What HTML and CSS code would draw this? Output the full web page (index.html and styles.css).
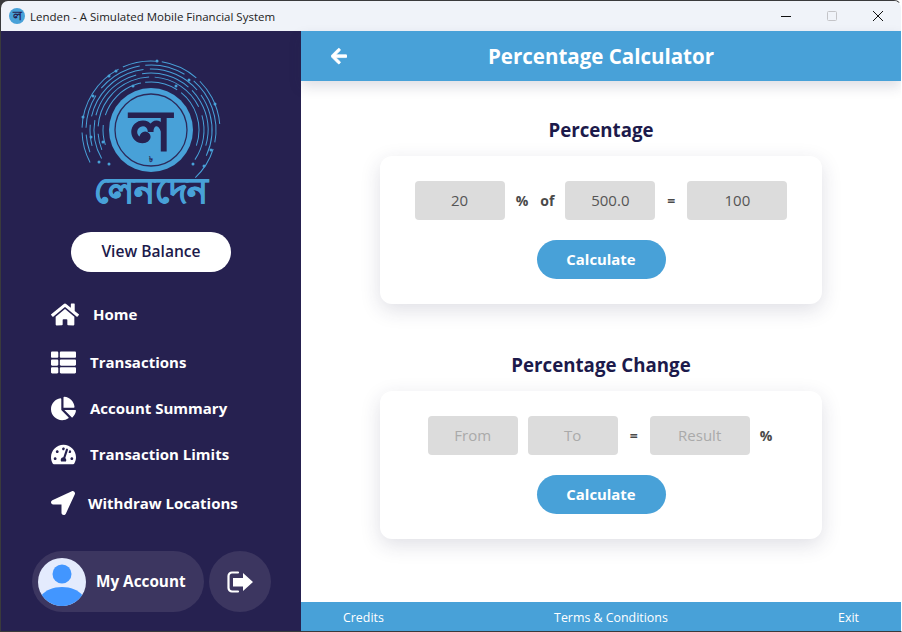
FILE: index.html
```html
<!DOCTYPE html>
<html lang="en">
<head>
<meta charset="utf-8">
<title>Lenden</title>
<link rel="stylesheet" href="styles.css">
</head>
<body>
<div class="window">
  <header class="titlebar">
    <svg class="app-icon" viewBox="0 0 16 16"><circle cx="8" cy="8" r="8" fill="#48a1d8"/><text class="app-letter" x="8" y="12" text-anchor="middle">ল</text></svg>
    <span class="app-title">Lenden - A Simulated Mobile Financial System</span>
    <div class="win-controls">
      <svg class="win-btn" viewBox="0 0 46 30"><path d="M18 15.500h10" stroke="#111" stroke-width="1"/></svg>
      <svg class="win-btn" viewBox="0 0 46 30"><rect x="18.500" y="10.500" width="9" height="9" rx="1" fill="none" stroke="#c4c4c8"/></svg>
      <svg class="win-btn" viewBox="0 0 46 30"><path d="M18 10l10 10M28 10L18 20" stroke="#111" stroke-width="1" fill="none"/></svg>
    </div>
  </header>
  <div class="app">
    <aside class="sidebar">
      <svg class="logo" viewBox="0 0 160 170">
        <g fill="none" stroke="#48a1d8" stroke-width="1">
          <circle cx="80" cy="80" r="69" pathLength="360" stroke-dasharray="26 4 60 4 30 3 32 4 40 157" transform="rotate(152 80 80)"/>
          <circle cx="80" cy="80" r="65" pathLength="360" stroke-dasharray="16 6 30 8 40 5 36 10 60 6 30 113" transform="rotate(160 80 80)"/>
          <circle cx="80" cy="80" r="61" pathLength="360" stroke-dasharray="20 8 70 6 50 6 60 140" transform="rotate(165 80 80)"/>
          <circle cx="80" cy="80" r="57" pathLength="360" stroke-dasharray="40 5 60 6 50 5 60 134" transform="rotate(150 80 80)"/>
          <circle cx="80" cy="80" r="53" pathLength="360" stroke-dasharray="18 8 84 6 60 10 50 124" transform="rotate(158 80 80)"/>
          <circle cx="80" cy="80" r="48" pathLength="360" stroke-dasharray="24 12 60 5 40 6 70 143" transform="rotate(162 80 80)"/>
        </g>
        <g fill="#48a1d8">
          <circle cx="38" cy="114" r="1.500"/><circle cx="28" cy="112" r="1.500"/><circle cx="12" cy="67" r="1.500"/><circle cx="22" cy="46" r="1.500"/>
          <circle cx="38" cy="26" r="1.500"/><circle cx="45" cy="21" r="1.500"/><circle cx="86" cy="11" r="1.500"/><circle cx="118" cy="30" r="1.500"/>
          <circle cx="144" cy="54" r="1.500"/><circle cx="122" cy="114" r="1.500"/><circle cx="133" cy="116" r="1.500"/><circle cx="140" cy="100" r="1.500"/>
          <circle cx="20" cy="87" r="1.500"/><circle cx="32" cy="92" r="1.500"/><circle cx="62" cy="36" r="1.500"/><circle cx="105" cy="36" r="1.500"/>
          <circle cx="80" cy="80" r="42"/>
        </g>
        <circle cx="80" cy="80" r="36" fill="none" stroke="#2c2a5a" stroke-width="1.300"/>
        <text class="logo-letter" x="80" y="100" text-anchor="middle">ল</text>
        <text class="logo-taka" x="80" y="112" text-anchor="middle">৳</text>
        <text class="logo-word" x="80" y="153" text-anchor="middle">লেনদেন</text>
      </svg>
      <button class="balance-btn">View Balance</button>
      <nav class="nav">
        <a class="nav-item">
          <svg class="ico-home" viewBox="0 0 576 512"><path d="M280.37 148.26L96 300.11V464a16 16 0 0 0 16 16l112.06-.29a16 16 0 0 0 15.92-16V368a16 16 0 0 1 16-16h64a16 16 0 0 1 16 16v95.64a16 16 0 0 0 16 16.05L464 480a16 16 0 0 0 16-16V300L295.67 148.26a12.19 12.19 0 0 0-15.3 0zM571.6 251.47L488 182.56V44.05a12 12 0 0 0-12-12h-56a12 12 0 0 0-12 12v72.61L318.47 43a48 48 0 0 0-61 0L4.34 251.47a12 12 0 0 0-1.6 16.9l25.5 31A12 12 0 0 0 45.15 301l235.22-193.74a12.19 12.19 0 0 1 15.3 0L530.9 301a12 12 0 0 0 16.9-1.6l25.5-31a12 12 0 0 0-1.7-16.93z"/></svg>
          <span>Home</span>
        </a>
        <a class="nav-item nav-t">
          <svg class="ico-md" viewBox="0 0 512 512"><path d="M149.333 216v80c0 13.255-10.745 24-24 24H24c-13.255 0-24-10.745-24-24v-80c0-13.255 10.745-24 24-24h101.333c13.255 0 24 10.745 24 24zM0 376v80c0 13.255 10.745 24 24 24h101.333c13.255 0 24-10.745 24-24v-80c0-13.255-10.745-24-24-24H24c-13.255 0-24 10.745-24 24zM125.333 32H24C10.745 32 0 42.745 0 56v80c0 13.255 10.745 24 24 24h101.333c13.255 0 24-10.745 24-24V56c0-13.255-10.745-24-24-24zm80 448H488c13.255 0 24-10.745 24-24v-80c0-13.255-10.745-24-24-24H205.333c-13.255 0-24 10.745-24 24v80c0 13.255 10.745 24 24 24zm-24-424v80c0 13.255 10.745 24 24 24H488c13.255 0 24-10.745 24-24V56c0-13.255-10.745-24-24-24H205.333c-13.255 0-24 10.745-24 24zm24 264H488c13.255 0 24-10.745 24-24v-80c0-13.255-10.745-24-24-24H205.333c-13.255 0-24 10.745-24 24v80c0 13.255 10.745 24 24 24z"/></svg>
          <span>Transactions</span>
        </a>
        <a class="nav-item nav-s">
          <svg class="ico-md" viewBox="0 0 544 512"><path d="M527.79 288H290.5l158.03 158.03c6.04 6.04 15.98 6.53 22.19.68 38.7-36.46 65.32-85.61 73.13-140.86 1.34-9.46-6.51-17.85-16.06-17.85zm-15.83-64.8C503.72 103.74 408.26 8.28 288.8.04 279.68-.59 272 7.1 272 16.24V240h223.77c9.14 0 16.82-7.68 16.19-16.8zM224 288V50.71c0-9.55-8.39-17.4-17.84-16.06C86.99 51.49-4.1 155.6.14 280.37 4.5 408.51 114.83 513.59 243.03 511.98c50.4-.63 96.97-16.87 135.26-44.03 7.9-5.6 8.42-17.23 1.57-24.08L224 288z"/></svg>
          <span>Account Summary</span>
        </a>
        <a class="nav-item nav-s">
          <svg class="ico-md" viewBox="0 0 576 512"><path d="M288 32C128.94 32 0 160.94 0 320c0 52.8 14.25 102.26 39.06 144.8 5.61 9.62 16.3 15.2 27.44 15.2h443c11.14 0 21.83-5.58 27.44-15.2C561.75 422.26 576 372.8 576 320c0-159.06-128.94-288-288-288zm0 64c14.71 0 26.58 10.13 30.32 23.65-1.11 2.26-2.64 4.23-3.45 6.67l-9.22 27.67c-5.13 3.49-10.97 6.01-17.64 6.01-17.67 0-32-14.33-32-32S270.33 96 288 96zM96 384c-17.67 0-32-14.33-32-32s14.33-32 32-32 32 14.33 32 32-14.33 32-32 32zm48-160c-17.67 0-32-14.33-32-32s14.33-32 32-32 32 14.33 32 32-14.33 32-32 32zm246.77-72.41l-61.33 184C343.13 347.33 352 364.54 352 384c0 11.72-3.38 22.55-8.88 32H232.88c-5.5-9.45-8.88-20.28-8.88-32 0-33.94 26.5-61.43 59.9-63.59l61.34-184.01c4.17-12.56 17.73-19.45 30.36-15.17 12.57 4.19 19.35 17.79 15.17 30.36zm14.66 57.2l15.52-46.55c3.47-1.29 7.13-2.23 11.05-2.23 17.67 0 32 14.33 32 32s-14.33 32-32 32c-11.38-.01-20.89-6.28-26.57-15.22zM480 384c-17.67 0-32-14.33-32-32s14.33-32 32-32 32 14.33 32 32-14.33 32-32 32z"/></svg>
          <span>Transaction Limits</span>
        </a>
        <a class="nav-item nav-w">
          <svg class="ico-loc" viewBox="0 0 512 512"><path d="M444.52 3.52L28.74 195.42c-47.97 22.39-31.98 92.75 19.19 92.75h175.91v175.91c0 51.17 70.36 67.17 92.75 19.19l191.9-415.78c15.99-38.39-25.59-79.97-63.97-63.97z"/></svg>
          <span>Withdraw Locations</span>
        </a>
      </nav>
      <div class="account-row">
        <div class="account-pill">
          <svg class="avatar" viewBox="0 0 48 48"><circle cx="24" cy="24" r="24" fill="#e4ebfd"/><circle cx="24" cy="16" r="9.500" fill="#4296ff"/><path d="M3.800 37C8 32 15 29 24 29s16 3 20.200 8A24 24 0 0 1 3.800 37z" fill="#4296ff"/></svg>
          <span>My Account</span>
        </div>
        <div class="logout">
          <svg viewBox="0 0 26 22"><path class="logout-bracket" d="M11 1.500H5A3.500 3.500 0 0 0 1.500 5v12A3.500 3.500 0 0 0 5 20.500h6"/><path d="M6 7h10V2l10 9-10 9v-4.500H6z"/></svg>
        </div>
      </div>
    </aside>
    <main class="main">
      <div class="topbar">
        <svg class="back" viewBox="0 0 448 512"><path d="M257.500 445.100l-22.200 22.200c-9.400 9.400-24.600 9.400-33.900 0L7 273c-9.400-9.400-9.400-24.600 0-33.900L201.400 44.700c9.400-9.400 24.600-9.400 33.900 0l22.200 22.200c9.500 9.500 9.300 25-.4 34.300L136.600 216H424c13.300 0 24 10.700 24 24v32c0 13.300-10.700 24-24 24H136.600l120.500 114.800c9.800 9.300 10 24.800.4 34.300z"/></svg>
        <h1>Percentage Calculator</h1>
      </div>
      <div class="content">
        <section class="calc">
          <h2>Percentage</h2>
          <div class="card">
            <div class="row">
              <div class="field f90">20</div>
              <b class="op op-pct">%</b>
              <b class="op op-of">of</b>
              <div class="field f90">500.0</div>
              <b class="op op-eq">=</b>
              <div class="field f100">100</div>
            </div>
            <button class="calc-btn">Calculate</button>
          </div>
        </section>
        <section class="calc">
          <h2>Percentage Change</h2>
          <div class="card">
            <div class="row">
              <div class="field f90 ph">From</div>
              <div class="field f90 ph">To</div>
              <b class="op op-eq2">=</b>
              <div class="field f100 ph">Result</div>
              <b class="op op-last">%</b>
            </div>
            <button class="calc-btn">Calculate</button>
          </div>
        </section>
      </div>
      <footer class="footer">
        <span>Credits</span>
        <span>Terms &amp; Conditions</span>
        <span>Exit</span>
      </footer>
    </main>
  </div>
</div>
</body>
</html>
```
FILE: styles.css
```css
* { box-sizing: border-box; }
html, body { margin: 0; height: 100%; }
body { background: linear-gradient(90deg, #3a3a3c 50%, #fff 50%); font-family: "Open Sans", "Noto Sans", sans-serif; overflow: hidden; }
.window { width: 902px; height: 632px; display: flex; flex-direction: column; border-radius: 8px 8px 0 0; overflow: hidden; border: 1px solid #3a3a3c; border-right-color: #fff; }
.titlebar { height: 30px; flex: none; display: flex; align-items: center; background: #f0f3f9; padding-left: 8px; }
.app-icon { width: 16px; height: 16px; }
.app-letter { font-size: 12px; font-weight: 700; fill: #262150; font-family: "Noto Sans", sans-serif; }
.app-title { font-size: 11.5px; color: #222; margin-left: 5px; }
.win-controls { margin-left: auto; display: flex; }
.win-btn { width: 46px; height: 30px; }
.app { flex: 1; display: flex; min-height: 0; }
.sidebar { width: 300px; flex: none; background: #262150; display: flex; flex-direction: column; align-items: center; }
.logo { width: 160px; height: 170px; margin-top: 19px; flex: none; }
.logo-letter { font-size: 56px; font-weight: 700; fill: #262150; stroke: #262150; stroke-width: 1.2px; font-family: "Noto Sans", sans-serif; }
.logo-taka { font-size: 8px; font-weight: 700; fill: #262150; font-family: "Noto Sans", sans-serif; }
.logo-word { font-size: 35px; font-weight: 700; fill: #48a1d8; stroke: #48a1d8; stroke-width: .8px; font-family: "Noto Sans", sans-serif; }
.balance-btn { width: 160px; height: 40px; margin-top: 12px; padding: 0 0 2px; border: 0; border-radius: 20px; background: #fff; color: #1c1a4b; font: 600 15.6px "Open Sans", sans-serif; flex: none; }
.nav { align-self: stretch; padding-left: 50px; display: flex; flex-direction: column; margin-top: 28px; }
.nav-item { display: flex; align-items: center; gap: 14px; height: 28px; color: #fff; font-size: 15px; font-weight: 700; }
.nav-item svg { fill: #fff; flex: none; }
.nav-t { margin-top: 20px; }
.nav-s { margin-top: 18px; }
.nav-w { margin-top: 21px; }
.ico-home { width: 28px; height: 25px; }
.ico-md { width: 25px; height: 25px; }
.ico-loc { width: 24px; height: 24px; margin-right: -1px; }
.account-row { display: flex; align-items: center; gap: 5px; margin-top: auto; margin-bottom: 19px; align-self: flex-start; margin-left: 31px; }
.account-pill { width: 172px; height: 61px; border-radius: 31px; background: #3c3660; display: flex; align-items: center; padding: 0 0 0 6px; gap: 10px; color: #fff; font-size: 15.3px; font-weight: 700; }
.account-pill span { padding-bottom: 2px; }
.avatar { width: 48px; height: 48px; }
.logout { width: 62px; height: 61px; border-radius: 50%; background: #3c3660; display: flex; align-items: center; justify-content: center; }
.logout svg { width: 26px; height: 22px; fill: #fff; }
.logout .logout-bracket { fill: none; stroke: #fff; stroke-width: 2.200px; stroke-linecap: round; }
.main { flex: 1; display: flex; flex-direction: column; background: #fff; min-width: 0; }
.topbar { position: relative; height: 50px; flex: none; background: #48a1d8; display: flex; align-items: center; justify-content: center; box-shadow: 0 6px 12px rgba(40, 40, 80, .15); }
.back { position: absolute; left: 30px; top: 16px; width: 16px; height: 18.300px; fill: #fff; stroke: #fff; stroke-width: 20px; }
.topbar h1 { margin: 0; color: #fff; font-size: 20.5px; font-weight: 700; }
.content { flex: 1; display: flex; flex-direction: column; align-items: center; padding-top: 35px; gap: 47px; }
.calc { display: flex; flex-direction: column; align-items: center; }
.calc h2 { margin: 0 0 13px; color: #1c1a4b; font-size: 18.700px; font-weight: 700; line-height: 27px; }
.card { width: 442px; height: 148px; background: #fff; border-radius: 12px; box-shadow: 0 6px 20px rgba(40, 40, 80, .15); display: flex; flex-direction: column; align-items: center; padding-top: 25px; }
.row { display: flex; align-items: center; height: 39px; }
.field { height: 39px; padding-bottom: 2px; background: #dcdcdc; border-radius: 4px; display: flex; align-items: center; justify-content: center; color: #555; font-size: 15px; }
.f90 { width: 90px; }
.f100 { width: 100px; }
.ph { color: #aaa; }
.row .ph + .ph { margin-left: 10px; }
.op { color: #4a4a4a; font-size: 14px; font-weight: 700; padding-bottom: 1px; }
.op-pct { margin-left: 11px; }
.op-of { margin: 0 11px 0 12px; }
.op-eq { margin: 0 12px; }
.op-eq2 { margin: 0 12px; }
.op-last { margin-left: 10px; padding-right: 2px; }
.calc-btn { width: 129px; height: 39px; margin-top: 20px; padding: 0 0 2px; border: 0; border-radius: 20px; background: #48a1d8; color: #fff; font: 700 14.900px "Open Sans", sans-serif; }
.footer { height: 29px; flex: none; background: #48a1d8; color: #fff; font-size: 12.400px; display: flex; align-items: center; justify-content: space-between; padding: 2px 42px 0; }
```
